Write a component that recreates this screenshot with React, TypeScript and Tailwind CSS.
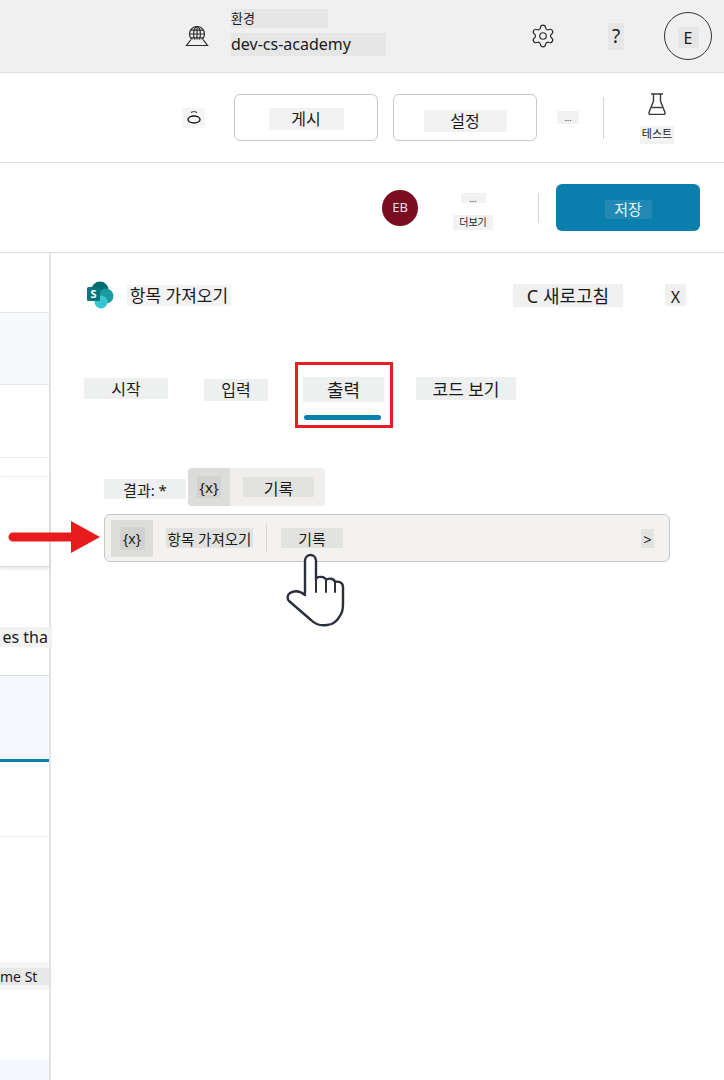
import { Settings } from "lucide-react";

const font = { fontFamily: '"Noto Sans", "Noto Sans CJK KR", sans-serif' };

const GlobeIcon = () => (
  <svg width="24" height="24" viewBox="0 0 24 24" fill="none" stroke="#2b2b2b" strokeWidth="1.2">
    <circle cx="12" cy="10" r="7.5" />
    <ellipse cx="12" cy="10" rx="3.4" ry="7.5" />
    <path d="M4.500 10h15M5.600 6.200h12.800M5.600 13.800h12.800M12 2.500v15" />
    <path d="M6 15.500L1.500 21.500h21L18 15.500" fill="#f0f0f0" />
  </svg>
);

const FlaskIcon = () => (
  <svg width="22" height="24" viewBox="0 0 22 24" fill="none" stroke="#3a3a3a" strokeWidth="1.4">
    <path d="M5 2h12M7.500 2v7L3 20.500c-.4 1 .2 1.900 1.200 1.900h13.600c1 0 1.600-.9 1.200-1.900L14.500 9V2" />
    <path d="M5.500 15.500h11" />
  </svg>
);

const SpinnerGlyph = () => (
  <svg width="16" height="14" viewBox="0 0 16 14" fill="none" stroke="#1a1a1a">
    <path d="M5 1.500c1.500-1 4.500-1 6 0" strokeWidth="1.200" />
    <ellipse cx="8" cy="8.500" rx="6" ry="3.500" strokeWidth="1.500" />
  </svg>
);

const SharePointLogo = () => (
  <svg width="28" height="28" viewBox="0 0 28 28">
    <circle cx="14" cy="9" r="8.500" fill="#036c70" />
    <circle cx="20" cy="15" r="7.500" fill="#1a9ba1" />
    <circle cx="15" cy="21" r="6.500" fill="#37c6d0" />
    <rect x="1" y="6" width="13" height="14" rx="1.500" fill="#03787c" />
    <text x="7.500" y="17" textAnchor="middle" fontSize="11" fontWeight="700" fill="#ffffff" fontFamily="Noto Sans">S</text>
  </svg>
);

const HandIcon = () => (
  <svg width="60" height="74" viewBox="0 0 60 74" fill="#ffffff" stroke="#2c2f3c" strokeWidth="2.400" strokeLinejoin="round" strokeLinecap="round">
    <path d="M19 40V8c0-8 11-8 11 0v18c1-3 9-3 10 1 2-2 8-2 9 2 3-1 8 0 8 5v16c0 4 0 8-2 11-3 6-8 11-14 11-6 1-12-1-16-5L3 48c-2-2-2-6 1-8 5-3 10-2 15 2" />
    <path d="M30 25v14M40 27v12M49 29v10" fill="none" strokeWidth="2" />
  </svg>
);

const tabPatch = "flex items-center justify-center bg-[#eef0ef] text-[#1a1a1a]";

export default function App() {
  return (
    <div className="relative h-[1080px] w-[724px] overflow-hidden bg-white text-[#1a1a1a]" style={font}>
      {/* top bar */}
      <header className="flex h-[73px] items-center border-b border-[#dddddd] bg-[#f0f0f0] pl-[185px]">
        <GlobeIcon />
        <div className="mb-[8px] ml-[22px] flex flex-col">
          <div className="flex h-[19px] w-[97px] items-center bg-[#e6e6e6] text-[13px] leading-none">환경</div>
          <div className="mt-[5px] flex h-[23px] w-[155px] items-center bg-[#e6e6e6] text-[16px] leading-none">dev-cs-academy</div>
        </div>
        <Settings className="ml-[144px]" size={26} strokeWidth={1.1} color="#2b2b2b" />
        <div className="ml-[52px] flex h-[27px] w-[16px] items-center justify-center bg-[#e6e6e6] text-[19px]">?</div>
        <div className="ml-[40px] flex h-[48px] w-[48px] items-center justify-center rounded-full border border-[#333333]">
          <span className="mt-[3px] flex h-[21px] w-[21px] items-center justify-center bg-[#e6e6e6] text-[16px]">E</span>
        </div>
      </header>

      {/* command bar */}
      <div className="flex h-[90px] items-center border-b border-[#dddddd] pl-[182px]">
        <div className="flex h-[20px] w-[23px] items-center justify-center bg-[#f5f5f5]">
          <SpinnerGlyph />
        </div>
        <button className="ml-[29px] flex h-[47px] w-[144px] items-center justify-center rounded-md border border-[#c8c8c8]">
          <span className="mt-[3px] flex h-[22px] w-[75px] items-center justify-center bg-[#f2f2f2] text-[16px]">게시</span>
        </button>
        <button className="ml-[15px] flex h-[47px] w-[144px] items-center justify-center rounded-md border border-[#c8c8c8]">
          <span className="mt-[7px] flex h-[22px] w-[83px] items-center justify-center bg-[#f2f2f2] text-[16px]">설정</span>
        </button>
        <div className="ml-[20px] flex h-[13px] w-[22px] items-center justify-center bg-[#f2f2f2] text-[9px] leading-none">...</div>
        <div className="ml-[24px] h-[42px] w-px bg-[#d4d4d4]" />
        <div className="ml-[36px] flex flex-col items-center">
          <FlaskIcon />
          <span className="mt-[10px] flex h-[18px] w-[34px] items-center justify-center bg-[#f2f2f2] text-[11px]">테스트</span>
        </div>
      </div>

      {/* designer toolbar */}
      <div className="flex h-[90px] items-center border-b border-[#dddddd] pl-[382px]">
        <div className="flex h-[36px] w-[36px] items-center justify-center rounded-full bg-[#7a0d20] text-[13px] text-[#f0dfe2]">EB</div>
        <div className="ml-[35px] mt-[8px] flex w-[40px] flex-col items-center">
          <span className="flex h-[10px] w-[25px] items-center justify-center bg-[#f2f2f2] text-[9px] leading-none">...</span>
          <span className="mt-[12px] flex h-[15px] w-[40px] items-center justify-center bg-[#f2f2f2] text-[10px]">더보기</span>
        </div>
        <div className="ml-[45px] h-[30px] w-px bg-[#d4d4d4]" />
        <button className="ml-[17px] flex h-[47px] w-[144px] items-center justify-center rounded-md bg-[#0a7fae]">
          <span className="mt-[3px] flex h-[19px] w-[47px] items-center justify-center bg-[#2189b4] text-[15px] text-[#e9f4f8]">저장</span>
        </button>
      </div>

      <div className="flex h-[827px]">
        {/* clipped list on the left */}
        <div className="flex w-[51px] shrink-0 flex-col border-r-2 border-[#e2e2e2]">
          <div className="h-[60px] border-b border-[#e6e6e6]" />
          <div className="h-[72px] border-b border-[#e6e6e6] bg-[#f7f9fc]" />
          <div className="h-[73px] border-b border-[#eeeeee]" />
          <div className="h-[19px] border-b border-[#eeeeee]" />
          <div className="h-[90px] border-b border-[#dcdcdc] shadow-[0_2px_3px_rgba(0,0,0,0.1)]" />
          <div className="flex h-[108px] flex-col">
            <div className="mt-[60px] flex h-[20px] w-[52px] items-center justify-end overflow-hidden whitespace-nowrap bg-[#f2f2f2] pr-[4px] text-[16px]">es tha</div>
          </div>
          <div className="h-[87px] border-b-[3px] border-t border-b-[#0a7fae] border-t-[#dedede] bg-[#f5f9fd]" />
          <div className="h-[75px] border-b border-[#f0f0f0]" />
          <div className="flex h-[154px] flex-col">
            <div className="mt-[125px] flex h-[28px] items-center bg-[#f5f5f5]">
              <span className="flex h-[17px] w-[51px] items-center overflow-hidden whitespace-nowrap bg-[#e8e8e8] text-[14px]">me St</span>
            </div>
          </div>
          <div className="h-[69px]" />
          <div className="flex-1 bg-[#f4f8fc]" />
        </div>

        {/* action panel */}
        <div className="flex-1">
          <div className="mt-[29px] flex h-[26px] items-center pl-[35px]">
            <SharePointLogo />
            <div className="ml-[13px] flex h-[21px] w-[104px] items-center justify-center whitespace-nowrap bg-[#f3f3f3] pt-[2px] text-[17px]">항목 가져오기</div>
            <div className="ml-[282px] flex h-[23px] w-[110px] items-center justify-center whitespace-nowrap bg-[#f0f0f0] pt-[3px] text-[18px]">C 새로고침</div>
            <div className="ml-[42px] flex h-[22px] w-[21px] items-center justify-center bg-[#f0f0f0] pt-[3px] text-[16px]">X</div>
          </div>

          <div className="mt-[54px] flex h-[66px] items-start pl-[33px]">
            <div className={`mt-[16px] h-[21px] w-[84px] text-[16px] ${tabPatch}`}>시작</div>
            <div className={`ml-[36px] mt-[17px] h-[22px] w-[64px] text-[16px] ${tabPatch}`}>입력</div>
            <div className="ml-[27px] h-[66px] w-[98px] border-[3px] border-[#e81c23]">
              <div className={`ml-[5px] mt-[12px] h-[25px] w-[81px] pt-[2px] text-[18px] ${tabPatch}`}>출력</div>
              <div className="ml-[6px] mt-[13px] h-[5px] w-[77px] rounded-full bg-[#0a7fae]" />
            </div>
            <div className={`ml-[23px] mt-[15px] h-[23px] w-[100px] pt-[2px] text-[17px] ${tabPatch}`}>코드 보기</div>
          </div>

          <div className="mt-[40px] flex h-[38px] items-start pl-[53px]">
            <div className="mt-[11px] flex h-[20px] w-[82px] items-center justify-center bg-[#eef0ef] pt-[3px] text-[15px]">결과: *</div>
            <div className="ml-[2px] flex h-[38px] w-[137px] items-center rounded bg-[#f0efee]">
              <div className="flex h-[38px] w-[42px] items-center justify-center rounded-l bg-[#dcdcda]">
                <span className="flex h-[22px] w-[24px] items-center justify-center whitespace-nowrap bg-[#d2d2d0] text-[15px]">{"{x}"}</span>
              </div>
              <span className="ml-[13px] flex h-[20px] w-[71px] items-center justify-center bg-[#e2e2e0] pt-[3px] text-[16px]">기록</span>
            </div>
          </div>

          <div className="ml-[53px] mt-[8px] flex h-[48px] w-[566px] items-center rounded-md border border-[#c8c8c8] bg-[#f3f2f1] pl-[6px]">
            <div className="flex h-[37px] w-[42px] items-center justify-center bg-[#dcdcda]">
              <span className="flex h-[23px] w-[25px] items-center justify-center whitespace-nowrap bg-[#d2d2d0] text-[14px]">{"{x}"}</span>
            </div>
            <span className="ml-[13px] flex h-[20px] w-[87px] items-center justify-center whitespace-nowrap bg-[#e2e2e0] pt-[3px] text-[14.5px]">항목 가져오기</span>
            <div className="ml-[13px] h-[30px] w-px bg-[#dadada]" />
            <span className="ml-[14px] flex h-[20px] w-[62px] items-center justify-center bg-[#e2e2e0] pt-[3px] text-[15px]">기록</span>
            <span className="ml-auto mr-[15px] flex h-[19px] w-[13px] items-center justify-center bg-[#e2e2e0] pt-[2px] text-[15px]">&gt;</span>
          </div>
        </div>
      </div>

      {/* annotation arrow */}
      <svg className="absolute left-[8px] top-[520px]" width="94" height="34" viewBox="0 0 94 34">
        <path d="M5 12.500h58V1l29 16-29 16V21.500H5a4.500 4.500 0 0 1 0-9z" fill="#e81c1c" />
      </svg>
      {/* hand cursor */}
      <div className="absolute left-[286px] top-[553px]">
        <HandIcon />
      </div>
    </div>
  );
}
